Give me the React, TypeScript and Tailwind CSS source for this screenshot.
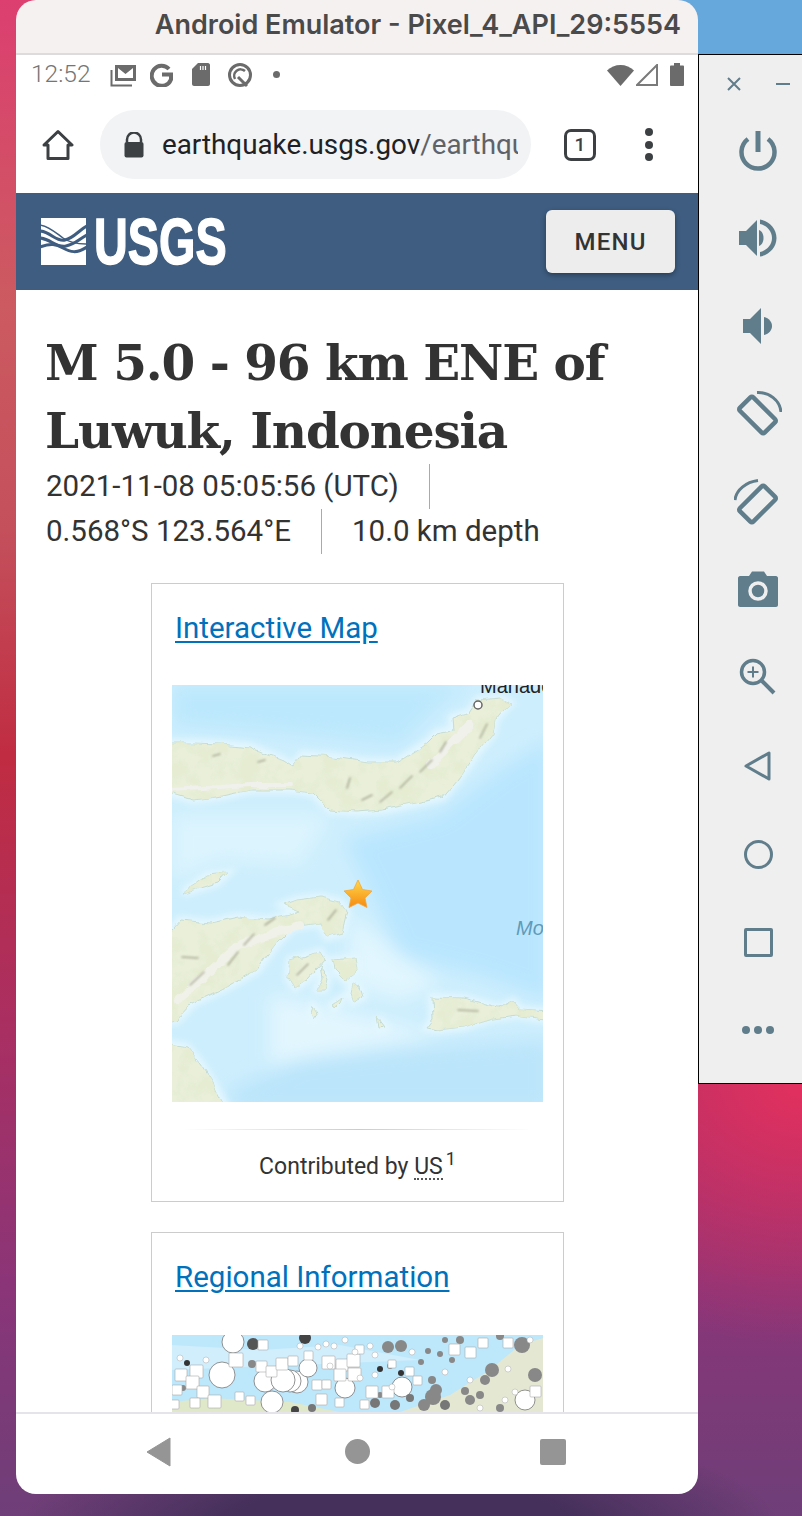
import type { ReactNode } from 'react';

const iconColor = '#607d8b';

function SideButton({ children }: { children: ReactNode }) {
  return <div className="h-[88px] flex items-center justify-center">{children}</div>;
}

function SidePanel() {
  return (
    <div className="w-[104px] flex-shrink-0">
      <div className="h-[54px] -ml-[24px] bg-[#66a8dc]" />
      <div className="h-[1030px] bg-[#efefef] border-t border-b border-l border-black box-border">
        <div className="h-[51px] flex items-center pl-[27px] gap-[34px] pt-[6px]">
          <svg width="16" height="16" viewBox="0 0 16 16">
            <path d="M2 2 14 14M14 2 2 14" stroke={iconColor} strokeWidth="2" />
          </svg>
          <div className="w-[14px] h-[2px] bg-[#607d8b]" />
        </div>
        <div className="flex flex-col pl-[15px]">
          <SideButton>
            <svg width="44" height="44" viewBox="0 0 44 44" fill="none" stroke={iconColor}>
              <path d="M12 11A16.500 16.500 0 1 0 32 11" strokeWidth="4.500" />
              <path d="M22 3V24" strokeWidth="5" />
            </svg>
          </SideButton>
          <SideButton>
            <svg width="44" height="44" viewBox="0 0 44 44" fill={iconColor}>
              <path d="M3 15H10L21 4V40L10 29H3Z" />
              <path d="M23 14C26 15 27.500 18.500 27.500 22S26 29 23 30Z" />
              <path d="M24 3.500C33 5 40.500 12.500 40.500 22S33 39 24 40.500V36C30.500 34.500 36 29 36 22S30.500 9.500 24 8Z" />
            </svg>
          </SideButton>
          <SideButton>
            <svg width="44" height="44" viewBox="0 0 44 44" fill={iconColor}>
              <path d="M7 15H14L25 4V40L14 29H7Z" />
              <path d="M28 13C33 14 36 18 36 22S33 30 28 31Z" />
            </svg>
          </SideButton>
          <SideButton>
            <svg width="48" height="48" viewBox="0 0 48 48" fill="none" stroke={iconColor}>
              <rect x="6" y="15.500" width="35" height="19" rx="2" strokeWidth="4.500" transform="rotate(45 23.500 25)" />
              <path d="M23 2.500C35 2 46 10 47 22" strokeWidth="3" />
            </svg>
          </SideButton>
          <SideButton>
            <svg width="48" height="48" viewBox="0 0 48 48" fill="none" stroke={iconColor}>
              <rect x="6" y="16.500" width="35" height="19" rx="2" strokeWidth="4.500" transform="rotate(-45 23.500 26)" />
              <path d="M1 22C2 12 12 4 24 2.500" strokeWidth="3" />
            </svg>
          </SideButton>
          <SideButton>
            <svg width="44" height="44" viewBox="0 0 44 44">
              <path
                fill={iconColor}
                d="M4 8H13L16 3.500H28L31 8H40C41 8 42 9 42 10V37C42 38 41 39 40 39H4C3 39 2 38 2 37V10C2 9 3 8 4 8Z"
              />
              <circle cx="22" cy="23" r="8" fill="none" stroke="#efefef" strokeWidth="3.500" />
            </svg>
          </SideButton>
          <SideButton>
            <svg width="44" height="44" viewBox="0 0 44 44" fill="none" stroke={iconColor}>
              <circle cx="17" cy="16" r="11.500" strokeWidth="3.500" />
              <path d="M26 25 38 37" strokeWidth="4" />
              <path d="M17 10.500V21.500M11.500 16H22.500" strokeWidth="2" />
            </svg>
          </SideButton>
          <SideButton>
            <svg width="44" height="44" viewBox="0 0 44 44" fill="none" stroke={iconColor} strokeWidth="3" strokeLinejoin="round">
              <path d="M33 9V35L10 22Z" />
            </svg>
          </SideButton>
          <SideButton>
            <div className="w-[29px] h-[29px] rounded-full border-[3px] border-[#607d8b]" />
          </SideButton>
          <SideButton>
            <div className="w-[29px] h-[29px] rounded-[2px] border-[3px] border-[#607d8b]" />
          </SideButton>
          <SideButton>
            <div className="flex gap-[4px]">
              <div className="w-[8px] h-[8px] rounded-full bg-[#607d8b]" />
              <div className="w-[8px] h-[8px] rounded-full bg-[#607d8b]" />
              <div className="w-[8px] h-[8px] rounded-full bg-[#607d8b]" />
            </div>
          </SideButton>
        </div>
      </div>
    </div>
  );
}

function StatusBar() {
  return (
    <div className="h-[39px] flex-shrink-0 flex items-center bg-white pl-[15px] pr-[14px] text-[#757575]">
      <span className="text-[24.500px] font-light w-[79px]">12:52</span>
      <svg width="26" height="24" viewBox="0 0 26 24" fill="none" className="mr-[14px]">
        <path d="M1.500 7V22.500H22" stroke="#6b6b6b" strokeWidth="2" />
        <path d="M5 2H26V18H5Z" fill="#6b6b6b" />
        <path d="M8 5V15H23V5L15.500 11Z" fill="#fff" />
      </svg>
      <svg width="24" height="24" viewBox="0 0 24 24" fill="none" className="mr-[18px]">
        <path d="M19 6A10 10 0 1 0 21 16.500 L21 11.500H12" stroke="#6b6b6b" strokeWidth="4" />
      </svg>
      <svg width="18" height="23" viewBox="0 0 18 23" className="mr-[17px]">
        <path d="M6 0H16C17 0 18 1 18 2V21C18 22 17 23 16 23H2C1 23 0 22 0 21V6Z" fill="#6b6b6b" />
        <path d="M8.500 3V7M11 3V7M13.500 3V7" stroke="#fff" strokeWidth="1.200" />
      </svg>
      <svg width="26" height="26" viewBox="0 0 26 26" fill="none" className="mr-[20px]">
        <circle cx="13" cy="13" r="10.500" stroke="#6b6b6b" strokeWidth="3" />
        <path d="M8 17A6.500 6.500 0 0 1 18 9" stroke="#6b6b6b" strokeWidth="2.500" />
        <path d="M11 15 20 24" stroke="#6b6b6b" strokeWidth="3" />
      </svg>
      <div className="w-[7px] h-[7px] rounded-full bg-[#6b6b6b]" />
      <div className="flex-1" />
      <svg width="27" height="22" viewBox="0 0 27 22" className="mr-[2px]">
        <path d="M0 6.500C7 -1 20 -1 27 6.500L13.500 22Z" fill="#6b6b6b" />
      </svg>
      <svg width="22" height="22" viewBox="0 0 22 22" fill="none" className="mr-[12px]">
        <path d="M1 21 21 1V21Z" stroke="#7a7a7a" strokeWidth="2" />
      </svg>
      <svg width="14" height="23" viewBox="0 0 14 23">
        <path d="M4 0H10V2.500H13C13.500 2.500 14 3 14 3.500V22C14 22.500 13.500 23 13 23H1C.500 23 0 22.500 0 22V3.500C0 3 .500 2.500 1 2.500H4Z" fill="#6b6b6b" />
      </svg>
    </div>
  );
}

function BrowserBar() {
  return (
    <div className="h-[99px] flex-shrink-0 bg-white flex items-center pl-[26px] pt-[2px]">
      <svg width="32" height="32" viewBox="0 0 32 32" fill="none" stroke="#3c4043" strokeWidth="3" strokeLinejoin="round">
        <path d="M2 16 16 2.500 30 16H26V29.500H6V16Z" />
      </svg>
      <div className="ml-[26px] w-[431px] h-[69px] rounded-full bg-[#f1f3f4] flex items-center pl-[24px] pr-[13px]">
        <svg width="20" height="26" viewBox="0 0 20 26" className="flex-shrink-0">
          <path d="M3 10V7.500A7 7 0 0 1 17 7.500V10" fill="none" stroke="#3c4043" strokeWidth="2.500" />
          <rect x="0.500" y="10" width="19" height="15.500" rx="2" fill="#3c4043" />
        </svg>
        <div className="ml-[18px] overflow-hidden whitespace-nowrap text-[27.800px] text-[#202124]">
          earthquake.usgs.gov<span className="text-[#5f6368]">/earthquakes</span>
        </div>
      </div>
      <div className="ml-[33px] w-[32px] h-[32px] rounded-[7px] border-[3px] border-[#3c4043] flex items-center justify-center text-[19px] font-medium text-[#3c4043] leading-none">
        1
      </div>
      <div className="ml-[49px] flex flex-col gap-[4.500px]">
        <div className="w-[8px] h-[8px] rounded-full bg-[#3c4043]" />
        <div className="w-[8px] h-[8px] rounded-full bg-[#3c4043]" />
        <div className="w-[8px] h-[8px] rounded-full bg-[#3c4043]" />
      </div>
    </div>
  );
}

function UsgsHeader() {
  return (
    <div className="h-[97px] flex-shrink-0 bg-[#3e5d80] flex items-center justify-between pl-[25px] pr-[23px]">
      <div className="flex items-center gap-[8px]">
        <svg width="45" height="47" viewBox="0 0 45 47">
          <rect width="45" height="47" fill="#fff" />
          <path d="M-1 13C10 14 15 24 24 22S38 12 46 8" fill="none" stroke="#3e5d80" strokeWidth="3" />
          <path d="M-1 20C10 21 15 30 25 28S38 21 46 17" fill="none" stroke="#3e5d80" strokeWidth="3" />
          <path d="M-1 29C10 25 15 26 22 30S36 36 46 29" fill="none" stroke="#3e5d80" strokeWidth="3" />
          <path d="M-1 7C8 8 15 15 22 20S36 26 46 26" fill="none" stroke="#3e5d80" strokeWidth="1.500" />
        </svg>
        <div className="w-[131px] h-[50px] flex items-center">
          <span className="origin-left scale-x-[0.72] font-[family-name:'Liberation_Sans',sans-serif] font-bold text-[65px] leading-none text-white whitespace-nowrap [-webkit-text-stroke:1.500px_white]">
            USGS
          </span>
        </div>
      </div>
      <div className="w-[129px] h-[63px] rounded-[6px] bg-[#ededed] shadow-[0_2px_5px_rgba(0,0,0,0.35)] flex items-center justify-center text-[24px] font-medium tracking-[1.200px] text-[#333]">
        MENU
      </div>
    </div>
  );
}

function Star() {
  return (
    <>
      <defs>
        <linearGradient id="starFill" x1="0" y1="0" x2="0" y2="1">
          <stop offset="0" stopColor="#ffd84a" />
          <stop offset="1" stopColor="#f58a10" />
        </linearGradient>
      </defs>
      <path
        d="M358 880 362.500 889.500 372 891 365 898 367 907.500 358 903 349 907.500 351 898 344 891 353.500 889.500Z"
        fill="url(#starFill)"
        stroke="#f2a63a"
        strokeWidth="0.800"
        strokeLinejoin="round"
      />
    </>
  );
}

const landPaths = [
  'M165 743 193 743 220 744 250 747 283 760 293 767 302 755 333 757 367 762 397 762 427 743 437 733 453 730 452 718 470 712 478 700 500 698 510 703 503 710 495 720 493 733 477 753 457 780 443 797 417 803 383 810 357 812 330 810 313 793 290 790 250 790 217 797 193 800 165 792Z',
  'M165 937 180 920 210 923 237 917 267 920 290 915 300 912 283 905 297 900 320 897 340 902 347 912 342 933 327 937 320 923 293 927 277 943 257 970 227 987 193 1003 177 1020 165 1022Z',
  'M290 960 320 952 325 960 307 980 295 988 288 977Z',
  'M333 960 355 958 357 970 345 980 335 970Z',
  'M320 967 328 977 325 990 317 990 322 977Z',
  'M352 983 360 987 363 997 353 1002 350 993Z',
  'M313 1007 318 1013 313 1020 311 1013Z',
  'M332 1005 342 998 340 1003 334 1009Z',
  'M378 1018 385 1027 380 1028Z',
  'M432 997 463 998 500 1008 513 1002 520 1010 550 1012 550 1020 517 1015 493 1018 463 1027 437 1030 427 1028 433 1020Z',
  'M165 1043 187 1047 200 1063 213 1083 227 1110 165 1110Z',
  'M183 893 207 875 227 873 217 883 193 890Z',
];

const ridgePaths = [
  'M380 802 392 792',
  'M400 788 412 776',
  'M420 772 432 760',
  'M440 752 446 742',
  'M347 788 350 778',
  'M362 800 372 795',
  'M213 756 220 754',
  'M258 762 265 760',
  'M190 985 204 972',
  'M228 965 238 952',
  'M244 945 254 934',
  'M182 957 198 958',
  'M265 925 275 918',
  'M297 975 308 964',
  'M328 920 336 910',
  'M458 1010 478 1011',
  'M480 738 487 724',
];

function MainMap() {
  return (
    <svg width="371" height="417" viewBox="172 685 371 417" className="block">
      <defs>
        <filter id="soft" x="-20%" y="-20%" width="140%" height="140%">
          <feGaussianBlur stdDeviation="9" />
        </filter>
        <filter id="halo" x="-20%" y="-20%" width="140%" height="140%">
          <feGaussianBlur stdDeviation="3" />
        </filter>
        <filter id="softer" x="-20%" y="-20%" width="140%" height="140%">
          <feGaussianBlur stdDeviation="0.900" />
        </filter>
        <filter id="coast" x="-10%" y="-10%" width="120%" height="120%">
          <feTurbulence type="fractalNoise" baseFrequency="0.07" numOctaves="3" seed="4" result="n" />
          <feDisplacementMap in="SourceGraphic" in2="n" scale="7" xChannelSelector="R" yChannelSelector="G" result="d" />
          <feGaussianBlur in="d" stdDeviation="0.600" />
        </filter>
        <filter id="mottle" x="0%" y="0%" width="100%" height="100%">
          <feTurbulence type="fractalNoise" baseFrequency="0.05" numOctaves="3" seed="9" />
          <feColorMatrix values="0 0 0 0 0.78 0 0 0 0 0.84 0 0 0 0 0.64 4 0 0 0 -1.700" />
          <feComposite in2="SourceGraphic" operator="in" />
        </filter>
      </defs>
      <rect x="172" y="685" width="371" height="417" fill="#cdeefd" />
      <g filter="url(#soft)">
        <path d="M172 685H470L440 705 400 745 300 735 172 725Z" fill="#bce8fd" />
        <path d="M345 840 440 815 500 770 550 740V1000L480 975 400 955 370 890Z" fill="#b9e6fe" />
        <path d="M230 1090 300 1060 400 1050 470 1045 550 1040V1110H230Z" fill="#bbe5fb" />
        <path d="M172 815H330L300 865 220 860 172 880Z" fill="#dcf4fe" />
        <path d="M270 995 340 1010 440 1035 350 1050 270 1065Z" fill="#e2f6fe" />
        <path d="M350 915 440 985 400 1000 350 985Z" fill="#e1f6fe" />
      </g>
      <g filter="url(#halo)">
        {landPaths.map((d) => (
          <path key={d} d={d} fill="#e4f7fe" stroke="#e4f7fe" strokeWidth="8" />
        ))}
      </g>
      <g filter="url(#coast)">
        {landPaths.map((d) => (
          <path key={d} d={d} fill="#e9efd9" stroke="#c6dcd3" strokeWidth="1" strokeLinejoin="round" />
        ))}
      </g>
      <g filter="url(#coast)">
        <g filter="url(#mottle)">
          {landPaths.map((d) => (
            <path key={d} d={d} fill="#000" />
          ))}
        </g>
      </g>
      <g filter="url(#coast)" fill="none" strokeLinecap="round">
        <path d="M430 765 470 725" stroke="#f1f1ec" strokeWidth="8" />
        <path d="M178 1000 240 945 300 925" stroke="#f0f1e8" strokeWidth="8" />
        <path d="M172 790 250 785 290 785" stroke="#f0f0ec" strokeWidth="4" />
      </g>
      <g filter="url(#softer)" fill="none" strokeLinecap="round">
        {ridgePaths.map((d) => (
          <path key={d} d={d} stroke="#a9aa94" strokeWidth="1.600" />
        ))}
      </g>
      <circle cx="478" cy="705" r="4" fill="#fff" stroke="#666" strokeWidth="1.500" />
      <text x="480" y="693" fontFamily="Liberation Sans, sans-serif" fontSize="20" fill="#222">
        Manado
      </text>
      <text x="516" y="935" fontFamily="Liberation Sans, sans-serif" fontStyle="italic" fontSize="20" fill="#5f9ab8">
        Mo
      </text>
      <Star />
    </svg>
  );
}

// white = m5+ markers, greys = older events
const regionalCircles: [number, number, number, string][] = [
  [233, 1342, 11, '#fff'], [253, 1344, 6, '#555'], [305, 1338, 6, '#444'], [187, 1363, 3, '#333'],
  [222, 1375, 13, '#fff'], [265, 1381, 11, '#fff'], [297, 1382, 11, '#fff'], [290, 1381, 11, '#fff'],
  [283, 1380, 12, '#fff'], [308, 1368, 9, '#fff'], [345, 1388, 10, '#fff'], [402, 1387, 10, '#fff'],
  [272, 1402, 11, '#fff'], [525, 1400, 10, '#fff'], [492, 1370, 7, '#888'], [535, 1375, 7, '#888'],
  [433, 1397, 8, '#888'], [522, 1345, 8, '#888'], [388, 1347, 6, '#888'], [401, 1346, 6, '#888'],
  [380, 1369, 3, '#333'], [401, 1373, 3, '#333'], [421, 1362, 3, '#888'], [390, 1366, 3, '#888'],
  [252, 1364, 4, '#888'], [183, 1388, 3, '#888'], [428, 1351, 3, '#888'], [440, 1354, 3, '#888'],
  [452, 1360, 3, '#888'], [432, 1380, 4, '#888'], [465, 1391, 4, '#888'], [480, 1395, 4, '#888'],
  [500, 1336, 4, '#888'], [470, 1400, 5, '#888'], [395, 1405, 5, '#777'], [375, 1403, 5, '#777'],
  [312, 1408, 4, '#777'], [295, 1410, 4, '#444'], [500, 1408, 4, '#888'], [445, 1340, 3, '#888'],
  [460, 1340, 4, '#888'], [436, 1390, 6, '#888'], [424, 1405, 6, '#888'], [445, 1405, 5, '#777'],
  [485, 1380, 5, '#888'], [410, 1398, 4, '#777'], [380, 1395, 3, '#888'],
];

const regionalSquares: [number, number, number][] = [
  [229, 1353, 14], [190, 1365, 13], [175, 1369, 12], [186, 1376, 13], [197, 1386, 12], [172, 1385, 10],
  [258, 1340, 10], [256, 1361, 11], [266, 1366, 11], [276, 1358, 12], [322, 1356, 13], [336, 1359, 12],
  [347, 1354, 13], [334, 1369, 12], [348, 1368, 13], [366, 1386, 12], [382, 1386, 12], [288, 1356, 10],
  [208, 1395, 13], [190, 1398, 10], [316, 1394, 11], [335, 1398, 9], [449, 1344, 11], [465, 1347, 11],
  [478, 1338, 10], [503, 1338, 10], [530, 1386, 11], [405, 1367, 9], [360, 1400, 9], [413, 1376, 9],
  [304, 1351, 9], [355, 1345, 9], [312, 1380, 10], [322, 1380, 9], [246, 1396, 9], [388, 1360, 8],
  [235, 1392, 9], [170, 1400, 9],
];

const regionalDots: [number, number][] = [
  [334, 1346], [326, 1344], [355, 1352], [375, 1355], [470, 1380], [508, 1369], [530, 1340], [330, 1366],
  [392, 1387], [445, 1372], [345, 1340], [318, 1347], [370, 1346], [206, 1360], [180, 1358], [480, 1408],
  [515, 1392], [505, 1400], [375, 1375], [300, 1346], [412, 1352], [360, 1378],
];

function RegionalMap() {
  return (
    <svg width="371" height="100" viewBox="172 1335 371 100" className="block">
      <rect x="172" y="1335" width="371" height="100" fill="#bde7fb" />
      <path d="M172 1345 260 1350 340 1345 420 1360 172 1370Z" fill="#d0eefc" />
      <path d="M172 1402 210 1398 290 1402 340 1412H172Z" fill="#dfe8c8" />
      <path d="M400 1412 450 1395 490 1370 520 1345 543 1338V1412Z" fill="#e4e8d2" />
      {regionalCircles.map(([cx, cy, r, fill]) => (
        <circle key={`${cx}-${cy}`} cx={cx} cy={cy} r={r} fill={fill} stroke={fill === '#fff' ? '#777' : 'none'} strokeWidth="0.800" />
      ))}
      {regionalSquares.map(([x, y, s]) => (
        <rect key={`${x}-${y}`} x={x} y={y} width={s} height={s} rx="1" fill="#fff" stroke="#aaa" strokeWidth="0.600" />
      ))}
      {regionalDots.map(([cx, cy]) => (
        <circle key={`${cx}-${cy}`} cx={cx} cy={cy} r="3" fill="#fff" stroke="#aaa" strokeWidth="0.500" />
      ))}
    </svg>
  );
}

function PageContent() {
  return (
    <div className="flex-1 min-h-0 overflow-hidden bg-white">
      <div className="pl-[29px] pr-[30px] pt-[39px]">
        <h1 className="font-[family-name:'DejaVu_Serif',serif] font-bold text-[48.500px] leading-[68px] text-[#333] tracking-[-1.200px] whitespace-nowrap">
          M 5.0 - 96 km ENE of
          <br />
          Luwuk, Indonesia
        </h1>
        <div className="-mt-[1px] pl-[1px] text-[29.500px] leading-[45px] text-[#333]">
          <div className="flex">
            <span className="pr-[30px] border-r border-[#aaa]">2021-11-08 05:05:56 (UTC)</span>
          </div>
          <div className="flex">
            <span className="pr-[30px] border-r border-[#aaa]">0.568°S 123.564°E</span>
            <span className="pl-[30px]">10.0 km depth</span>
          </div>
        </div>
      </div>

      <div className="mt-[29px] ml-[135px] w-[413px] flex flex-col gap-[30px]">
        <div className="border border-[#ccc] px-[20px] pt-[21px] pb-[18px]">
          <a className="block pl-[3px] text-[29.500px] leading-[46px] text-[#0071bc] underline underline-offset-[3px]">
            Interactive Map
          </a>
          <div className="mt-[34px]">
            <MainMap />
          </div>
          <div className="mt-[27px] h-[1px] mx-[10px] bg-[linear-gradient(to_right,#fff,#ccc,#fff)]" />
          <div className="mt-[21px] text-center text-[23px] leading-[32px] text-[#333]">
            Contributed by <span className="border-b-2 border-dotted border-[#555] leading-[22px] inline-block">US</span>
            <sup className="ml-[3px] text-[18px]">1</sup>
          </div>
        </div>

        <div className="border border-[#ccc] px-[20px] pt-[21px] pb-[19px]">
          <a className="block pl-[3px] text-[29.500px] leading-[46px] text-[#0071bc] underline underline-offset-[3px]">
            Regional Information
          </a>
          <div className="mt-[35px]">
            <RegionalMap />
          </div>
        </div>
      </div>
    </div>
  );
}

function NavBar() {
  return (
    <div className="h-[82px] flex-shrink-0 bg-white border-t-2 border-[#e4e4ea] flex items-center pb-[5px]">
      <div className="ml-[130px] w-[25px]">
        <svg width="25" height="30" viewBox="0 0 25 30">
          <path d="M24 1V29L1 15Z" fill="#959595" stroke="#959595" strokeWidth="1" strokeLinejoin="round" />
        </svg>
      </div>
      <div className="ml-[174px] w-[25px] h-[25px] rounded-full bg-[#959595]" />
      <div className="ml-[170px] w-[26px] h-[26px] rounded-[2px] bg-[#959595]" />
    </div>
  );
}

export default function App() {
  return (
    <div className="w-[802px] h-[1516px] overflow-hidden flex font-[family-name:Roboto,sans-serif] bg-[radial-gradient(ellipse_300px_260px_at_800px_1085px,#e2305f_0%,rgba(226,48,95,0)_100%),radial-gradient(ellipse_380px_110px_at_400px_1530px,#44305a_45%,rgba(68,48,90,0)_100%),linear-gradient(to_bottom,#dc3f70_0%,#cc5a60_20%,#c4505c_35%,#c02c42_50%,#a92f62_68%,#8a3578_85%,#6e3f78_100%)]">
      <div className="w-[16px] flex-shrink-0" />
      <div className="relative z-10 w-[682px] h-[1494px] flex flex-col rounded-[20px] overflow-hidden flex-shrink-0">
        <div className="h-[55px] flex-shrink-0 bg-[#f6f1f1] border-b-2 border-[#dcdcdc] flex items-center justify-end pr-[17px] pb-[3px]">
          <span className="font-[family-name:Inter,sans-serif] font-semibold text-[27px] text-[#4a4a4a] whitespace-nowrap">
            Android Emulator - Pixel_4_API_29:5554
          </span>
        </div>
        <StatusBar />
        <BrowserBar />
        <UsgsHeader />
        <PageContent />
        <NavBar />
      </div>
      <SidePanel />
    </div>
  );
}
